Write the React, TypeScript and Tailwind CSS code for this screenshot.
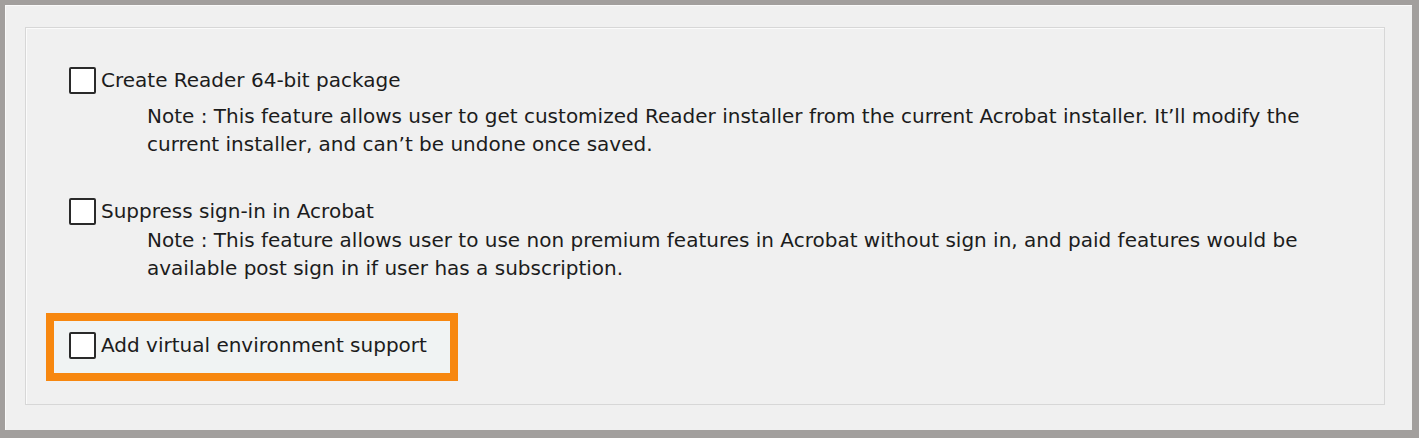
function Box() {
  return <span className="block w-[27px] h-[27px] shrink-0 border-2 border-[#2a2a2a] bg-white rounded-[2px]" />
}

function Option({ label }: { label: string }) {
  return (
    <div className="flex items-center h-[28px] gap-[5px]">
      <Box />
      <span className="leading-[28px]">{label}</span>
    </div>
  )
}

function Note({ lines, className = '' }: { lines: string[]; className?: string }) {
  return (
    <p className={`pl-[78px] leading-[28px] whitespace-nowrap ${className}`}>
      {lines.map((l, i) => (
        <span key={i} className="block">{l}</span>
      ))}
    </p>
  )
}

export default function App() {
  return (
    <div
      className="w-[1419px] h-[438px] bg-[#a29f9d] pt-[5px] pl-[5px] pr-[7px] pb-[8px] text-[20px] text-[#1c1c1c]"
      style={{ fontFamily: '"DejaVu Sans", "Noto Sans", sans-serif' }}
    >
      <div className="h-full bg-[#f0f0f0] border-l border-t border-[#fafafa] pt-[21px] pl-[19px] pr-[27px] pb-[25px]">
        <div className="h-full border border-[#d7d7d7] shadow-[inset_1px_1px_0_#fbfbfb] pl-[20px]">
          <div className="pl-[23px] pt-[38px]">
            <Option label="Create Reader 64-bit package" />
            <Note
              className="mt-[8px]"
              lines={[
                'Note : This feature allows user to get customized Reader installer from the current Acrobat installer. It’ll modify the',
                'current installer, and can’t be undone once saved.',
              ]}
            />
            <div className="mt-[39px]">
              <Option label="Suppress sign-in in Acrobat" />
            </div>
            <Note
              className="mt-[1px]"
              lines={[
                'Note : This feature allows user to use non premium features in Acrobat without sign in, and paid features would be',
                'available post sign in if user has a subscription.',
              ]}
            />
          </div>
          <div className="mt-[31px] w-[412px] border-[8px] border-[#f7870f] bg-[#f0f3f3] pl-[15px] pt-[10px] pb-[14px]">
            <Option label="Add virtual environment support" />
          </div>
        </div>
      </div>
    </div>
  )
}
